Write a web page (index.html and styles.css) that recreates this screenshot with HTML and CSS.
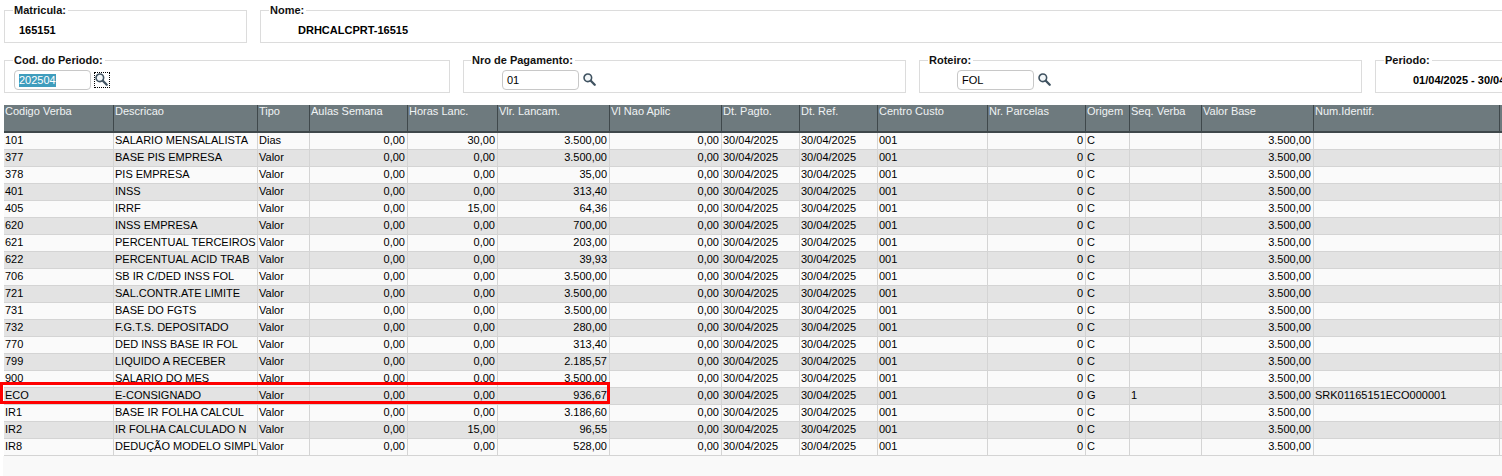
FILE: index.html
```html
<!DOCTYPE html>
<html lang="pt">
<head>
<meta charset="utf-8">
<title>Verbas</title>
<link rel="stylesheet" href="styles.css">
</head>
<body>
<svg class="defs" width="0" height="0"><symbol id="lupa" viewBox="0 0 14 14"><circle cx="5.2" cy="5.2" r="4.1" fill="#f2f6f8" stroke="#3f5260" stroke-width="1.7"/><path d="M8.4 8.4 L12.6 12.6" stroke="#3f5260" stroke-width="2.5" stroke-linecap="round"/></symbol></svg>
<div class="row row-top">
  <fieldset class="box box-mat"><legend>Matricula:</legend><span class="val val-mat">165151</span></fieldset>
  <fieldset class="box box-nome"><legend>Nome:</legend><span class="val val-nome">DRHCALCPRT-16515</span></fieldset>
</div>
<div class="row row-second">
  <fieldset class="box box-cod"><legend>Cod. do Periodo:</legend>
    <div class="field field-cod"><div class="input"><span class="sel">202504</span></div><span class="btn focus"><svg class="lupa"><use href="#lupa"/></svg></span></div>
  </fieldset>
  <fieldset class="box box-nro"><legend>Nro de Pagamento:</legend>
    <div class="field field-nro"><div class="input">01</div><span class="btn"><svg class="lupa"><use href="#lupa"/></svg></span></div>
  </fieldset>
  <fieldset class="box box-rot"><legend>Roteiro:</legend>
    <div class="field field-rot"><div class="input">FOL</div><span class="btn"><svg class="lupa"><use href="#lupa"/></svg></span></div>
  </fieldset>
  <fieldset class="box box-per"><legend>Periodo:</legend><span class="val val-per">01/04/2025 - 30/04/2025</span></fieldset>
</div>
<div class="grid-wrap">
<div class="mark"></div>
<table class="grid">
<colgroup><col class="c1"><col class="c2"><col class="c3"><col class="c4"><col class="c5"><col class="c6"><col class="c7"><col class="c8"><col class="c9"><col class="c10"><col class="c11"><col class="c12"><col class="c13"><col class="c14"><col class="c15"><col class="c16"></colgroup>
<thead><tr><th>Codigo Verba</th><th>Descricao</th><th>Tipo</th><th>Aulas Semana</th><th>Horas Lanc.</th><th>Vlr. Lancam.</th><th>Vl Nao Aplic</th><th>Dt. Pagto.</th><th>Dt. Ref.</th><th>Centro Custo</th><th>Nr. Parcelas</th><th>Origem</th><th>Seq. Verba</th><th>Valor Base</th><th>Num.Identif.</th><th></th></tr></thead>
<tbody>
<tr><td>101</td><td>SALARIO MENSALALISTA</td><td>Dias</td><td class="n">0,00</td><td class="n">30,00</td><td class="n">3.500,00</td><td class="n">0,00</td><td>30/04/2025</td><td>30/04/2025</td><td>001</td><td class="n">0</td><td>C</td><td></td><td class="n">3.500,00</td><td></td><td></td></tr>
<tr><td>377</td><td>BASE PIS EMPRESA</td><td>Valor</td><td class="n">0,00</td><td class="n">0,00</td><td class="n">3.500,00</td><td class="n">0,00</td><td>30/04/2025</td><td>30/04/2025</td><td>001</td><td class="n">0</td><td>C</td><td></td><td class="n">3.500,00</td><td></td><td></td></tr>
<tr><td>378</td><td>PIS EMPRESA</td><td>Valor</td><td class="n">0,00</td><td class="n">0,00</td><td class="n">35,00</td><td class="n">0,00</td><td>30/04/2025</td><td>30/04/2025</td><td>001</td><td class="n">0</td><td>C</td><td></td><td class="n">3.500,00</td><td></td><td></td></tr>
<tr><td>401</td><td>INSS</td><td>Valor</td><td class="n">0,00</td><td class="n">0,00</td><td class="n">313,40</td><td class="n">0,00</td><td>30/04/2025</td><td>30/04/2025</td><td>001</td><td class="n">0</td><td>C</td><td></td><td class="n">3.500,00</td><td></td><td></td></tr>
<tr><td>405</td><td>IRRF</td><td>Valor</td><td class="n">0,00</td><td class="n">15,00</td><td class="n">64,36</td><td class="n">0,00</td><td>30/04/2025</td><td>30/04/2025</td><td>001</td><td class="n">0</td><td>C</td><td></td><td class="n">3.500,00</td><td></td><td></td></tr>
<tr><td>620</td><td>INSS EMPRESA</td><td>Valor</td><td class="n">0,00</td><td class="n">0,00</td><td class="n">700,00</td><td class="n">0,00</td><td>30/04/2025</td><td>30/04/2025</td><td>001</td><td class="n">0</td><td>C</td><td></td><td class="n">3.500,00</td><td></td><td></td></tr>
<tr><td>621</td><td>PERCENTUAL TERCEIROS</td><td>Valor</td><td class="n">0,00</td><td class="n">0,00</td><td class="n">203,00</td><td class="n">0,00</td><td>30/04/2025</td><td>30/04/2025</td><td>001</td><td class="n">0</td><td>C</td><td></td><td class="n">3.500,00</td><td></td><td></td></tr>
<tr><td>622</td><td>PERCENTUAL ACID TRAB</td><td>Valor</td><td class="n">0,00</td><td class="n">0,00</td><td class="n">39,93</td><td class="n">0,00</td><td>30/04/2025</td><td>30/04/2025</td><td>001</td><td class="n">0</td><td>C</td><td></td><td class="n">3.500,00</td><td></td><td></td></tr>
<tr><td>706</td><td>SB IR C/DED INSS FOL</td><td>Valor</td><td class="n">0,00</td><td class="n">0,00</td><td class="n">3.500,00</td><td class="n">0,00</td><td>30/04/2025</td><td>30/04/2025</td><td>001</td><td class="n">0</td><td>C</td><td></td><td class="n">3.500,00</td><td></td><td></td></tr>
<tr><td>721</td><td>SAL.CONTR.ATE LIMITE</td><td>Valor</td><td class="n">0,00</td><td class="n">0,00</td><td class="n">3.500,00</td><td class="n">0,00</td><td>30/04/2025</td><td>30/04/2025</td><td>001</td><td class="n">0</td><td>C</td><td></td><td class="n">3.500,00</td><td></td><td></td></tr>
<tr><td>731</td><td>BASE DO FGTS</td><td>Valor</td><td class="n">0,00</td><td class="n">0,00</td><td class="n">3.500,00</td><td class="n">0,00</td><td>30/04/2025</td><td>30/04/2025</td><td>001</td><td class="n">0</td><td>C</td><td></td><td class="n">3.500,00</td><td></td><td></td></tr>
<tr><td>732</td><td>F.G.T.S. DEPOSITADO</td><td>Valor</td><td class="n">0,00</td><td class="n">0,00</td><td class="n">280,00</td><td class="n">0,00</td><td>30/04/2025</td><td>30/04/2025</td><td>001</td><td class="n">0</td><td>C</td><td></td><td class="n">3.500,00</td><td></td><td></td></tr>
<tr><td>770</td><td>DED INSS BASE IR FOL</td><td>Valor</td><td class="n">0,00</td><td class="n">0,00</td><td class="n">313,40</td><td class="n">0,00</td><td>30/04/2025</td><td>30/04/2025</td><td>001</td><td class="n">0</td><td>C</td><td></td><td class="n">3.500,00</td><td></td><td></td></tr>
<tr><td>799</td><td>LIQUIDO A RECEBER</td><td>Valor</td><td class="n">0,00</td><td class="n">0,00</td><td class="n">2.185,57</td><td class="n">0,00</td><td>30/04/2025</td><td>30/04/2025</td><td>001</td><td class="n">0</td><td>C</td><td></td><td class="n">3.500,00</td><td></td><td></td></tr>
<tr><td>900</td><td>SALARIO DO MES</td><td>Valor</td><td class="n">0,00</td><td class="n">0,00</td><td class="n">3.500,00</td><td class="n">0,00</td><td>30/04/2025</td><td>30/04/2025</td><td>001</td><td class="n">0</td><td>C</td><td></td><td class="n">3.500,00</td><td></td><td></td></tr>
<tr><td>ECO</td><td>E-CONSIGNADO</td><td>Valor</td><td class="n">0,00</td><td class="n">0,00</td><td class="n">936,67</td><td class="n">0,00</td><td>30/04/2025</td><td>30/04/2025</td><td>001</td><td class="n">0</td><td>G</td><td>1</td><td class="n">3.500,00</td><td>SRK01165151ECO000001</td><td></td></tr>
<tr><td>IR1</td><td>BASE IR FOLHA CALCUL</td><td>Valor</td><td class="n">0,00</td><td class="n">0,00</td><td class="n">3.186,60</td><td class="n">0,00</td><td>30/04/2025</td><td>30/04/2025</td><td>001</td><td class="n">0</td><td>C</td><td></td><td class="n">3.500,00</td><td></td><td></td></tr>
<tr><td>IR2</td><td>IR FOLHA CALCULADO N</td><td>Valor</td><td class="n">0,00</td><td class="n">15,00</td><td class="n">96,55</td><td class="n">0,00</td><td>30/04/2025</td><td>30/04/2025</td><td>001</td><td class="n">0</td><td>C</td><td></td><td class="n">3.500,00</td><td></td><td></td></tr>
<tr><td>IR8</td><td>DEDUÇÃO MODELO SIMPL</td><td>Valor</td><td class="n">0,00</td><td class="n">0,00</td><td class="n">528,00</td><td class="n">0,00</td><td>30/04/2025</td><td>30/04/2025</td><td>001</td><td class="n">0</td><td>C</td><td></td><td class="n">3.500,00</td><td></td><td></td></tr>
</tbody>
</table>
<div class="foot"></div>
</div>
</body>
</html>
```
FILE: styles.css
```css
html, body { margin: 0; padding: 0; background: #fff; overflow: hidden; height: 476px; }
body { font-family: "Liberation Sans", Arial, sans-serif; font-size: 11px; color: #000; width: 1502px; }
.defs { position: absolute; }
.row { display: flex; overflow: hidden; }
.row-top { padding: 4px 0 0 4px; height: 39px; gap: 13px; }
.row-second { padding: 11px 0 0 4px; height: 39px; gap: 13px; }
.box { box-sizing: border-box; height: 39px; margin: 0; padding: 0 0 0 8px; border: 1px solid #dcdcdc; flex: none; display: block; min-width: 0; }
.box legend { font-weight: bold; font-size: 11px; line-height: 13px; padding: 0 2px 0 1px; color: #111; }
.box-mat { width: 243px; }
.box-nome { width: 1300px; }
.box-cod { width: 446px; }
.box-nro { width: 443px; }
.box-nro legend { margin-left: -1px; }
.box-rot { width: 443px; }
.box-per { width: 300px; }
.val { display: block; font-weight: bold; line-height: 13px; padding-top: 7px; }
.val-mat { padding-left: 6px; }
.val-nome { padding-left: 29px; }
.val-per { padding-left: 29px; white-space: nowrap; }
.field { display: flex; align-items: center; margin-top: 3px; }
.field-cod { padding-left: 1px; }
.field-nro { padding-left: 30px; }
.field-rot { padding-left: 29px; }
.input { box-sizing: border-box; width: 77px; height: 20px; border: 1px solid #c8c8c8; border-radius: 4px; background: #fff; padding-left: 4px; line-height: 18px; font-size: 11px; color: #000; }
.sel { background: #3f9dbd; color: #fff; display: inline-block; line-height: 13px; }
.btn { display: block; box-sizing: border-box; width: 16px; height: 16px; margin-left: 3px; border: 1px solid transparent; }
.btn.focus { border: 1px dotted #000; }
.lupa { display: block; width: 13px; height: 13px; }
.grid-wrap { position: relative; margin-top: 12px; padding-left: 3px; }
.grid { table-layout: fixed; border-collapse: separate; border-spacing: 0; width: 1499px; margin-left: 1px; font-size: 11px; }
.grid th { box-sizing: border-box; height: 28px; padding: 0 1px; background: #6e7a7e; color: #f0f3f4; font-weight: normal; text-align: left; vertical-align: top; line-height: 12px; border-right: 1px solid #3f484b; border-bottom: 2px solid #3f484b; white-space: nowrap; overflow: hidden; }
.grid td { box-sizing: border-box; height: 17px; padding: 0 1px; line-height: 14px; vertical-align: top; border-right: 1px solid #d4d4d4; border-bottom: 1px solid #d4d4d4; white-space: nowrap; overflow: hidden; background: #fafafa; color: #000; }
.grid tbody tr:nth-child(even) td { background: #e3e3e3; }
.grid td.n { text-align: right; padding-right: 2px; }
.c1 { width: 110px; } .c2 { width: 144px; } .c3 { width: 52px; } .c4 { width: 98px; }
.c5 { width: 90px; } .c6 { width: 112px; } .c7 { width: 112px; } .c8 { width: 78px; }
.c9 { width: 78px; } .c10 { width: 110px; } .c11 { width: 98px; } .c12 { width: 44px; }
.c13 { width: 72px; } .c14 { width: 112px; } .c15 { width: 186px; } .c16 { width: 3px; }
.foot { height: 20px; background: #f9f9f9; }
.mark { position: absolute; box-sizing: border-box; left: 0; top: 277px; width: 610px; height: 22px; border: 3px solid #f00; z-index: 2; }
```
